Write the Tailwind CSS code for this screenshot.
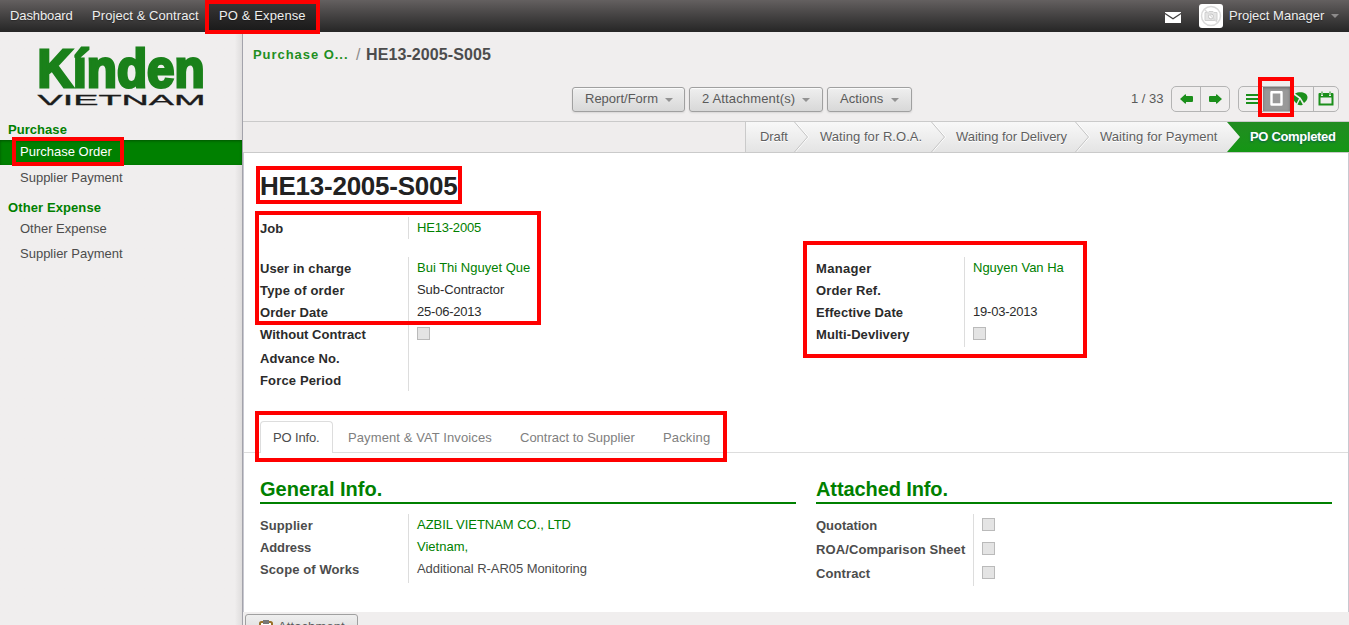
<!DOCTYPE html>
<html lang="en">
<head>
<meta charset="utf-8">
<title>HE13-2005-S005</title>
<script src="https://cdn.jsdelivr.net/npm/@tailwindcss/browser@4"></script>
</head>
<body class="relative w-[1349px] h-[625px] overflow-hidden bg-[#f0eeee] text-[13px] leading-[22px] text-[#4c4c4c] font-['Liberation_Sans',Arial,sans-serif]">

<header class="flex h-8 items-center bg-linear-to-b from-[#646060] to-[#262626] text-[#eeeeee] [text-shadow:0_1px_1px_rgba(0,0,0,0.3)]">
  <nav class="flex h-full flex-1 items-center leading-8">
    <a class="w-[82px] pl-[10px] tracking-[-0.1px]">Dashboard</a>
    <a class="w-[127px] pl-[10px] tracking-[0.07px] whitespace-nowrap">Project &amp; Contract</a>
    <a class="h-full w-[107px] bg-linear-to-b from-[#3c3a3a] to-[#191919] pl-[10px] tracking-[0.12px] whitespace-nowrap">PO &amp; Expense</a>
  </nav>
  <svg class="mt-0.5 mr-[18px]" width="16" height="11" viewBox="0 0 16 11"><path fill="#fff" d="M0 0h16v.800L8 6 0 .800zM0 2.300l8 5.200 8-5.200V11H0z"/></svg>
  <span class="flex h-6 w-6 items-center justify-center rounded-[3px] bg-white">
    <svg width="22" height="22" viewBox="0 0 22 22" fill="none" stroke="#dadada"><circle cx="11" cy="11" r="9.500" stroke-width="1.500"/><path d="M5 7.500h3l1-1h4l1 1h3v8H5z" fill="#e4e4e4" stroke="#cfcfcf"/><circle cx="11" cy="11.500" r="2.500" fill="#fff" stroke="#c4c4c4"/><path d="M4.500 4.500l13 13" stroke-width="1.300"/></svg>
  </span>
  <span class="ml-1.5 w-[97px] whitespace-nowrap">Project Manager</span>
  <svg class="mr-[10px] ml-[5px]" width="8" height="4"><path fill="#8d8b8b" d="M0 0h8L4 4z"/></svg>
</header>

<div class="flex h-[593px]">
  <aside class="w-[243px] shrink-0 border-r border-[#a3a3ab] bg-linear-to-r from-[#f0eeee] from-97% to-[#dfdddd]">
    <svg class="mt-[13px] ml-[34px] block" width="176" height="64" viewBox="0 0 176 64">
      <text x="3.500" y="42" font-size="53" font-weight="700" fill="#1a811a" stroke="#1a811a" stroke-width="3" stroke-linejoin="miter" textLength="167" lengthAdjust="spacingAndGlyphs">Kínden</text>
      <text x="3.500" y="59.500" font-size="15.500" fill="#1c1c1c" stroke="#1c1c1c" stroke-width="0.300" textLength="168" lengthAdjust="spacingAndGlyphs">VIETNAM</text>
    </svg>
    <div class="mt-[10px] h-[21px] pl-2 font-bold tracking-[0.05px] text-[#008000]">Purchase</div>
    <div class="h-[25px] bg-[#008000] pl-5 leading-[23px] text-white shadow-[inset_0_1px_3px_rgba(0,0,0,0.35)]">Purchase Order</div>
    <div class="h-[32px] pl-5 leading-[25px]">Supplier Payment</div>
    <div class="h-[19px] pl-2 font-bold tracking-[0.1px] text-[#008000]">Other Expense</div>
    <div class="h-[25px] pl-5 leading-[25px]">Other Expense</div>
    <div class="h-[25px] pl-5 leading-[25px]">Supplier Payment</div>
  </aside>

  <main class="flex min-w-0 flex-1 flex-col">
    <div class="flex h-[45px] items-center pl-[10px] whitespace-nowrap">
      <a class="w-[103px] font-bold tracking-[0.95px] text-[#1f8f1f]">Purchase O...</a>
      <span class="w-[10px] text-base text-[#8c8c8c]">/</span>
      <span class="text-base font-bold tracking-[0.1px]">HE13-2005-S005</span>
    </div>

    <div class="flex h-[44px] items-center pl-[329px] text-[#5a5a5a]">
      <div class="flex gap-1 whitespace-nowrap">
        <button class="flex h-[25px] w-[113px] items-center gap-[7px] rounded-[3px] border border-[#a0a0a0] bg-linear-to-b from-[#efefef] to-[#d8d8d8] pl-3 shadow-[0_1px_2px_rgba(0,0,0,0.1),inset_0_1px_1px_rgba(255,255,255,0.8)]"><span class="w-[73px] text-left">Report/Form</span><svg class="mt-0.5" width="8" height="4"><path fill="#929292" d="M0 0h8L4 4z"/></svg></button>
        <button class="flex h-[25px] w-[134px] items-center gap-[7px] rounded-[3px] border border-[#a0a0a0] bg-linear-to-b from-[#efefef] to-[#d8d8d8] pl-3 shadow-[0_1px_2px_rgba(0,0,0,0.1),inset_0_1px_1px_rgba(255,255,255,0.8)]"><span class="w-[93px] text-left tracking-[0.15px]">2 Attachment(s)</span><svg class="mt-0.5" width="8" height="4"><path fill="#929292" d="M0 0h8L4 4z"/></svg></button>
        <button class="flex h-[25px] w-[85px] items-center gap-[7px] rounded-[3px] border border-[#a0a0a0] bg-linear-to-b from-[#efefef] to-[#d8d8d8] pl-3 shadow-[0_1px_2px_rgba(0,0,0,0.1),inset_0_1px_1px_rgba(255,255,255,0.8)]"><span class="w-[44px] text-left tracking-[0.1px]">Actions</span><svg class="mt-0.5" width="8" height="4"><path fill="#929292" d="M0 0h8L4 4z"/></svg></button>
      </div>
      <span class="ml-[219px] w-[40px] whitespace-nowrap">1 / 33</span>
      <div class="flex h-[26px] w-[59px] rounded-[5px] border border-[#b4b4b4]">
        <div class="flex w-[29px] items-center justify-center border-r border-[#b4b4b4]"><svg width="13" height="10" viewBox="0 0 13 10"><path fill="#1b8f1b" d="M0 5L5 .500q1-.500 1 .500v1h6q1 0 1 1v4q0 1-1 1H6v1q0 1-1 .500z"/></svg></div>
        <div class="flex flex-1 items-center justify-center"><svg width="13" height="10" viewBox="0 0 13 10"><path fill="#1b8f1b" d="M13 5L8 .500q-1-.500-1 .500v1H1Q0 2 0 3v4q0 1 1 1h6v1q0 1 1 .500z"/></svg></div>
      </div>
      <div class="ml-2 flex h-[26px] w-[101px] overflow-hidden rounded-[5px] border border-[#b4b4b4]">
        <div class="flex w-6 items-start pt-[7px] pl-[7px]"><svg width="13" height="10"><path fill="#1b8f1b" d="M0 0h13v2H0zM0 4h13v2H0zM0 8h13v2H0z"/></svg></div>
        <div class="flex w-[27px] items-start justify-center bg-[#999] pt-[4px] shadow-[inset_0_1px_3px_rgba(0,0,0,0.3)]"><svg width="13" height="15" viewBox="0 0 13 15"><path fill="none" stroke="#fff" stroke-width="2.400" stroke-linejoin="round" d="M1.500 1.300h10v12.200h-10z"/></svg></div>
        <div class="flex w-6 items-start border-r border-[#b4b4b4] pt-[5px] pl-[3px]"><svg width="15" height="14" viewBox="0 0 15 14"><path fill="#1b8f1b" d="M2 1.500C6-.800 14-.500 14.500 5c0 3-1.500 4.500-3.500 6L7.500 5.500zM7 7.500l2.800 5.200Q7 14 4.500 12.500zM1 3l5 3.500-2.500 5Q-1 8 1 3z"/></svg></div>
        <div class="flex flex-1 items-start justify-center pt-[4px]"><svg width="16" height="15" viewBox="0 0 16 15"><path fill="#1b8f1b" fill-rule="evenodd" d="M.500 3q0-1 1-1H3v3h2V2h6v3h2V2h1.500q1 0 1 1v11.500H.500zm2 3.500v6h11v-6zM3.500.500h1v3.500h-1zM11.500.500h1v3.500h-1z"/></svg></div>
      </div>
    </div>

    <div class="flex h-8 justify-end border-y border-[#cacaca] bg-[#efeded] leading-[29px] whitespace-nowrap text-[#5f5f5f]">
      <div class="flex w-[604px] border-l border-[#cacaca] bg-linear-to-b from-[#f8f8f8] to-[#e4e4e4]">
        <span class="w-[48px] pl-[14px] tracking-[-0.1px] [text-shadow:0_1px_0_#fff]">Draft</span>
        <svg width="16" height="30" viewBox="0 0 16 30" fill="none"><path stroke="#fff" d="M1.500 0l13 15-13 15"/><path stroke="#c4c4c4" d="M.500 0l13 15L.500 30"/></svg>
        <span class="w-[121px] pl-[10px] tracking-[0.05px] [text-shadow:0_1px_0_#fff]">Wating for R.O.A.</span>
        <svg width="16" height="30" viewBox="0 0 16 30" fill="none"><path stroke="#fff" d="M1.500 0l13 15-13 15"/><path stroke="#c4c4c4" d="M.500 0l13 15L.500 30"/></svg>
        <span class="w-[128px] pl-[9px] tracking-[-0.06px] [text-shadow:0_1px_0_#fff]">Waiting for Delivery</span>
        <svg width="16" height="30" viewBox="0 0 16 30" fill="none"><path stroke="#fff" d="M1.500 0l13 15-13 15"/><path stroke="#c4c4c4" d="M.500 0l13 15L.500 30"/></svg>
        <span class="w-[136px] pl-[9px] tracking-[0.05px] [text-shadow:0_1px_0_#fff]">Waiting for Payment</span>
        <span class="flex-1 bg-linear-to-b from-[#218c21] to-[#149614] pl-[23px] font-bold tracking-[-0.33px] text-white [clip-path:polygon(0_0,100%_0,100%_100%,0_100%,13px_50%)] [text-shadow:0_1px_2px_#0c5c50]">PO Completed</span>
      </div>
    </div>

    <section class="h-[459px] border-x border-[#c8c8d0] bg-white pl-4">
      <h1 class="h-[64px] pt-[17px] text-[26px] leading-[32px] font-bold tracking-[-0.25px] text-[#222]">HE13-2005-S005</h1>
      <div class="flex text-[#2b2b2b]">
        <div class="w-[556px]">
          <div class="flex h-[22px]"><b class="w-[149px] border-r border-[#ddd] leading-[24px]">Job</b><span class="pl-2 tracking-[-0.2px] text-[#008000]">HE13-2005</span></div>
          <div class="mt-[18px] flex h-[134px]">
            <div class="w-[149px] border-r border-[#ddd] leading-[22px] font-bold tracking-[0.08px]">
              <div class="h-[22px] pt-px">User in charge</div><div class="h-[22px] pt-px tracking-[0.2px]">Type of order</div><div class="h-[22px] pt-px">Order Date</div><div class="h-6 pt-px tracking-[0.03px]">Without Contract</div><div class="h-[22px] pt-px">Advance No.</div><div class="h-[22px] pt-px tracking-[0.15px]">Force Period</div>
            </div>
            <div class="pl-2">
              <div class="text-[#008000]">Bui Thi Nguyet Que</div><div class="tracking-[-0.07px]">Sub-Contractor</div><div class="tracking-[-0.22px]">25-06-2013</div>
              <div class="mt-[4px] h-[13px] w-[13px] border border-[#bababa] bg-[#e4e4e4]"></div>
            </div>
          </div>
        </div>
        <div class="mt-[40px] flex h-[90px]">
          <div class="w-[149px] border-r border-[#ddd] font-bold tracking-[0.08px]">
            <div class="h-[22px] pt-px tracking-[0.3px]">Manager</div><div class="h-[22px] pt-px tracking-[0.15px]">Order Ref.</div><div class="h-[22px] pt-px">Effective Date</div><div class="h-[22px] pt-px">Multi-Devlivery</div>
          </div>
          <div class="pl-2">
            <div class="h-[44px] text-[#008000]">Nguyen Van Ha</div><div class="tracking-[-0.22px]">19-03-2013</div>
            <div class="mt-[4px] h-[13px] w-[13px] border border-[#bababa] bg-[#e4e4e4]"></div>
          </div>
        </div>
      </div>

      <div class="mt-[30px] -ml-4 flex h-8 border-b border-[#ddd] pl-4 leading-[33px] whitespace-nowrap text-[#808080]">
        <span class="h-8 w-[73px] rounded-t border border-b-0 border-[#ddd] bg-white pl-3 leading-[32px] tracking-[-0.15px] text-[#4c4c4c]">PO Info.</span>
        <span class="ml-[15px] w-[172px] tracking-[0.1px]">Payment &amp; VAT Invoices</span>
        <span class="w-[143px]">Contract to Supplier</span>
        <span class="tracking-[0.15px]">Packing</span>
      </div>

      <div class="flex pt-[25px]">
        <div class="w-[556px]">
          <h2 class="h-[26px] w-[536px] border-b-2 border-[#008000] text-[20px] leading-[23px] font-bold text-[#008000]">General Info.</h2>
          <div class="mt-[10px] flex h-[69px]">
            <div class="w-[149px] border-r border-[#ddd] font-bold tracking-[0.1px]"><div class="pt-px">Supplier</div><div class="tracking-[-0.12px]">Address</div><div>Scope of Works</div></div>
            <div class="pl-2"><div class="tracking-[-0.03px] text-[#008000]">AZBIL VIETNAM CO., LTD</div><div class="text-[#008000]">Vietnam,</div><div class="tracking-[-0.05px]">Additional R-AR05 Monitoring</div></div>
          </div>
        </div>
        <div class="w-[516px]">
          <h2 class="h-[26px] border-b-2 border-[#008000] text-[20px] leading-[23px] font-bold tracking-[-0.1px] text-[#008000]">Attached Info.</h2>
          <div class="mt-[10px] flex h-[72px]">
            <div class="w-[158px] border-r border-[#ddd] leading-6 font-bold tracking-[0.1px] whitespace-nowrap"><div class="tracking-[-0.03px]">Quotation</div><div>ROA/Comparison Sheet</div><div>Contract</div></div>
            <div class="flex flex-col gap-[11px] pt-1 pl-2">
              <div class="h-[13px] w-[13px] border border-[#bababa] bg-[#e4e4e4]"></div>
              <div class="h-[13px] w-[13px] border border-[#bababa] bg-[#e4e4e4]"></div>
              <div class="h-[13px] w-[13px] border border-[#bababa] bg-[#e4e4e4]"></div>
            </div>
          </div>
        </div>
      </div>
    </section>

    <div class="h-[13px] overflow-hidden pt-[2px] pl-[2px]">
      <button class="flex h-[25px] w-[113px] items-center gap-[5px] rounded-[3px] border border-[#a0a0a0] bg-linear-to-b from-[#efefef] to-[#d8d8d8] pl-[13px] tracking-[0.1px] text-[#5a5a5a]"><svg class="mt-px" width="14" height="15" viewBox="0 0 14 15"><rect x="1" y="2" width="12" height="12" rx="1.500" fill="#fff" stroke="#9a7128" stroke-width="2"/><path fill="#777" d="M4 0h6v4H4z"/></svg>Attachment</button>
    </div>
  </main>
</div>

<!-- highlight frames over the page -->
<div class="absolute top-0 left-[205px] h-[34px] w-[115px] border-4 border-[#f00]"></div>
<div class="absolute top-[137px] left-[12px] h-[29px] w-[112px] border-4 border-[#f00]"></div>
<div class="absolute top-[77px] left-[1258px] h-[40px] w-[36px] border-4 border-[#f00]"></div>
<div class="absolute top-[166px] left-[256px] h-[38px] w-[206px] border-4 border-[#f00]"></div>
<div class="absolute top-[211px] left-[255px] h-[114px] w-[286px] border-4 border-[#f00]"></div>
<div class="absolute top-[241px] left-[803px] h-[117px] w-[284px] border-4 border-[#f00]"></div>
<div class="absolute top-[411px] left-[255px] h-[51px] w-[472px] border-4 border-[#f00]"></div>
</body>
</html>
